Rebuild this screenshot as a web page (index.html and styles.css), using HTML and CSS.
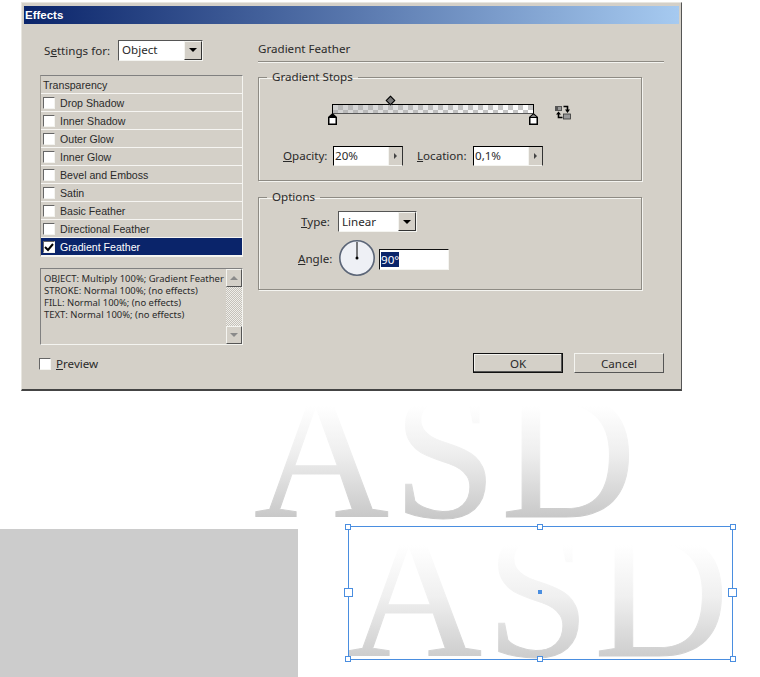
FILE: index.html
```html
<!DOCTYPE html>
<html lang="en">
<head>
    <meta charset="UTF-8">
    <title>Effects</title>
    <link rel="stylesheet" href="styles.css">
</head>
<body>
    <div class="window">
        <div class="titlebar">Effects</div>
        <div class="dialog-body">
            <div class="left-col">
                <div class="settings-row">
                    <label class="settings-label">S<u>e</u>ttings for:</label>
                    <div class="select select-object"><span class="select-value">Object</span><span class="select-btn"><i></i></span></div>
                </div>
                <ul class="effects-list">
                    <li class="effects-head">Transparency</li>
                    <li><span class="check"></span>Drop Shadow</li>
                    <li><span class="check"></span>Inner Shadow</li>
                    <li><span class="check"></span>Outer Glow</li>
                    <li><span class="check"></span>Inner Glow</li>
                    <li><span class="check"></span>Bevel and Emboss</li>
                    <li><span class="check"></span>Satin</li>
                    <li><span class="check"></span>Basic Feather</li>
                    <li><span class="check"></span>Directional Feather</li>
                    <li class="selected">
                        <span class="check">
                            <svg width="10" height="10" viewBox="0 0 10 10"><path d="M1 5l3 3 5-6" fill="none" stroke="#000" stroke-width="2"/></svg>
                        </span>Gradient Feather
                    </li>
                </ul>
                <div class="summary">
                    <div class="summary-text">
                        OBJECT: Multiply 100%; Gradient Feather<br>
                        STROKE: Normal 100%; (no effects)<br>
                        FILL: Normal 100%; (no effects)<br>
                        TEXT: Normal 100%; (no effects)
                    </div>
                    <div class="scrollbar">
                        <span class="scroll-btn"><i class="arrow-up"></i></span>
                        <span class="scroll-btn"><i class="arrow-down"></i></span>
                    </div>
                </div>
                <div class="preview-row"><span class="check"></span><span><u>P</u>review</span></div>
            </div>

            <div class="right-col">
                <div class="panel-title">Gradient Feather</div>

                <fieldset class="group group-stops">
                    <legend>Gradient Stops</legend>
                    <div class="ramp-row">
                        <div class="ramp">
                            <span class="midpoint"></span>
                            <svg class="stop stop-left" width="9" height="12" viewBox="0 0 9 12"><path d="M4.500 0L9 4v8H0V4z" fill="#000"/><rect x="1.500" y="5" width="6" height="5.500" fill="#fff"/></svg>
                            <svg class="stop stop-right" width="9" height="12" viewBox="0 0 9 12"><path d="M4.500 0L9 4v8H0V4z" fill="#000"/><path d="M4.500 1.500L7.500 4H1.500z" fill="#888"/><rect x="1.500" y="5" width="6" height="5.500" fill="#fff"/></svg>
                        </div>
                        <svg class="swap" width="18" height="15" viewBox="0 0 18 15">
                            <rect x="1" y="1" width="7" height="5" fill="#555"/>
                            <rect x="4" y="2" width="3" height="3" fill="#999"/>
                            <path d="M9.500 1.500h4v4" fill="none" stroke="#000" stroke-width="1.600"/>
                            <path d="M11 4.500h5L13.500 8z" fill="#000"/>
                            <path d="M8.500 12.500h-4v-4" fill="none" stroke="#000" stroke-width="1.600"/>
                            <path d="M2 9.500h5L4.500 6.500z" fill="#000"/>
                            <rect x="9.500" y="9" width="7" height="5" fill="#999" stroke="#333" stroke-width=".8"/>
                        </svg>
                    </div>
                    <div class="stops-fields">
                        <label><u>O</u>pacity:</label>
                        <div class="stepper"><span class="stepper-value">20%</span><span class="stepper-btn"><i></i></span></div>
                        <label class="label-location"><u>L</u>ocation:</label>
                        <div class="stepper"><span class="stepper-value">0,1%</span><span class="stepper-btn"><i></i></span></div>
                    </div>
                </fieldset>

                <fieldset class="group group-options">
                    <legend>Options</legend>
                    <div class="type-row">
                        <label><u>T</u>ype:</label>
                        <div class="select select-type"><span class="select-value">Linear</span><span class="select-btn"><i></i></span></div>
                    </div>
                    <div class="angle-row">
                        <label><u>A</u>ngle:</label>
                        <svg class="dial" width="38" height="38" viewBox="0 0 38 38">
                            <circle cx="19" cy="19" r="17.200" fill="#eef0f5" stroke="#5b6577" stroke-width="1.600"/>
                            <path d="M19 3v16" stroke="#000" stroke-width="1"/>
                            <circle cx="19" cy="19" r="1.500" fill="#000"/>
                        </svg>
                        <div class="angle-input"><span class="sel-text">90°</span></div>
                    </div>
                </fieldset>

                <div class="buttons">
                    <button class="btn btn-default">OK</button>
                    <button class="btn">Cancel</button>
                </div>
            </div>
        </div>
    </div>

    <div class="grey-block"></div>
    <div class="asd asd-back">ASD</div>
    <div class="asd asd-front">ASD</div>

    <div class="selection">
        <span class="handle h-tl"></span>
        <span class="handle h-tm"></span>
        <span class="handle h-tr"></span>
        <span class="handle big h-ml"></span>
        <span class="center-dot"></span>
        <span class="handle big h-mr"></span>
        <span class="handle h-bl"></span>
        <span class="handle h-bm"></span>
        <span class="handle h-br"></span>
    </div>
</body>
</html>
```

FILE: styles.css
```css
html, body {
    margin: 0;
    padding: 0;
}
body {
    position: relative;
    width: 760px;
    height: 677px;
    overflow: hidden;
    background: #fff;
    font-family: "Noto Sans", sans-serif;
    font-size: 11.600px;
    color: #2a2a2a;
}

/* dialog window */
.window {
    position: absolute;
    left: 21px;
    top: 2px;
    width: 661px;
    height: 389px;
    box-sizing: border-box;
    padding: 3px 2px 0 2px;
    background: #d4d0c8;
    border: 1px solid #e8e6e0;
    border-right: 1px solid #555;
    border-bottom: 2px solid #444;
    z-index: 2;
}
.titlebar {
    height: 18px;
    line-height: 18px;
    padding-left: 1px;
    color: #fff;
    font-family: "Liberation Sans", sans-serif;
    font-weight: bold;
    font-size: 11.500px;
    background: linear-gradient(to right, #0a246a, #a6caf0);
}
.dialog-body {
    display: flex;
    padding: 16px 0 0 16px;
}
.left-col {
    width: 203px;
    flex-shrink: 0;
}
.right-col {
    width: 406px;
    margin-left: 15px;
}

/* settings for */
.settings-row {
    display: flex;
    align-items: center;
    height: 20px;
    padding-left: 4px;
}
.settings-label {
    width: 74px;
}

/* select */
.select {
    display: flex;
    box-sizing: border-box;
    height: 21px;
    background: #fff;
    border: 1px solid;
    border-color: #555 #f4f4f0 #f4f4f0 #555;
}
.select-object {
    width: 85px;
}
.select-object .select-value {
    line-height: 17px;
}
.select-type {
    width: 79px;
}
.select-value {
    flex: 1;
    line-height: 19px;
    padding-left: 3px;
}
.select-btn {
    display: flex;
    align-items: center;
    justify-content: center;
    width: 16px;
    background: #d4d0c8;
    border: 1px solid;
    border-color: #f4f4f0 #333 #333 #f4f4f0;
}
.select-btn i {
    border-left: 4px solid transparent;
    border-right: 4px solid transparent;
    border-top: 4px solid #000;
}

/* effects list */
.effects-list {
    list-style: none;
    margin: 15px 0 0;
    padding: 0;
    border-top: 1px solid #808080;
    border-left: 1px solid #a09c94;
    border-right: 1px solid #f4f4f0;
    border-bottom: 1px solid #f4f4f0;
}
.effects-list li {
    display: flex;
    align-items: center;
    box-sizing: border-box;
    height: 18px;
    padding-left: 2px;
    font-family: "Liberation Sans", sans-serif;
    font-size: 10.600px;
    border-bottom: 1px solid #f6f5f2;
}
.effects-list li .check {
    margin-right: 5px;
}
.effects-list .selected {
    background: #0a246a;
    color: #fff;
}
.check {
    display: flex;
    align-items: center;
    justify-content: center;
    box-sizing: border-box;
    width: 12px;
    height: 12px;
    flex-shrink: 0;
    background: #fff;
    border: 1px solid;
    border-color: #666 #f4f4f0 #f4f4f0 #666;
}

/* summary box */
.summary {
    display: flex;
    box-sizing: border-box;
    height: 77px;
    margin-top: 11px;
    border: 1px solid;
    border-color: #808080 #f4f4f0 #f4f4f0 #808080;
}
.summary-text {
    flex: 1;
    padding: 4px 0 0 3px;
    font-size: 9.450px;
    line-height: 12px;
    white-space: nowrap;
}
.scrollbar {
    display: flex;
    flex-direction: column;
    justify-content: space-between;
    width: 16px;
    background: repeating-conic-gradient(#f0eee9 0 25%, #c4c1ba 0 50%) 0 0 / 2px 2px;
}
.scroll-btn {
    display: flex;
    align-items: center;
    justify-content: center;
    height: 16px;
    background: #d4d0c8;
    border: 1px solid;
    border-color: #f4f4f0 #555 #555 #f4f4f0;
}
.arrow-up {
    border-left: 4px solid transparent;
    border-right: 4px solid transparent;
    border-bottom: 4px solid #8a8a8a;
}
.arrow-down {
    border-left: 4px solid transparent;
    border-right: 4px solid transparent;
    border-top: 4px solid #8a8a8a;
}
.preview-row {
    display: flex;
    align-items: center;
    gap: 5px;
    margin-top: 11px;
    margin-left: -1px;
}

/* right side */
.panel-title {
    height: 21px;
    line-height: 18px;
    border-bottom: 1px solid #8e8b84;
    box-shadow: 0 1px 0 #f4f4f0;
}
.group {
    box-sizing: border-box;
    width: 384px;
    margin: 0;
    padding: 0;
    min-width: 0;
    border: 1px solid #8e8b84;
    box-shadow: inset 1px 1px 0 #f4f4f0, 1px 1px 0 #f4f4f0;
}
.group legend {
    margin-left: 8px;
    padding: 0 5px;
    line-height: 16px;
}
.group-stops {
    height: 112px;
    margin-top: 7px;
}
.group-options {
    height: 101px;
    margin-top: 8px;
}

/* gradient ramp */
.ramp-row {
    display: flex;
    align-items: flex-start;
    padding: 19px 0 0 73px;
}
.ramp {
    position: relative;
    box-sizing: border-box;
    width: 202px;
    height: 10px;
    border: 1px solid #000;
    border-bottom-color: #555;
    background:
        linear-gradient(to right, rgba(170, 170, 170, .55), rgba(255, 255, 255, 0)),
        repeating-conic-gradient(#c6c6c6 0 25%, #fff 0 50%) 0 0 / 10px 10px;
}
.midpoint {
    position: absolute;
    left: 54px;
    top: -8px;
    width: 5px;
    height: 5px;
    background: #777;
    border: 1px solid #000;
    transform: rotate(45deg);
}
.stop {
    position: absolute;
    top: 8px;
}
.stop-left {
    left: -5px;
}
.stop-right {
    right: -5px;
}
.swap {
    margin: 1px 0 0 20px;
}
.stops-fields {
    display: flex;
    align-items: center;
    height: 21px;
    margin-top: 25px;
    padding-left: 24px;
}
.stops-fields label {
    width: 50px;
}
.stops-fields .label-location {
    width: 56px;
    margin-left: 14px;
}
.stepper {
    display: flex;
    box-sizing: border-box;
    width: 70px;
    height: 20px;
    background: #fff;
    border: 1px solid;
    border-color: #000 #333 #f4f4f0 #000;
}
.stepper-value {
    flex: 1;
    line-height: 18px;
    padding-left: 1px;
}
.stepper-btn {
    display: flex;
    align-items: center;
    justify-content: center;
    width: 13px;
    background: #d4d0c8;
    border-left: 1px solid #f4f4f0;
}
.stepper-btn i {
    border-top: 3px solid transparent;
    border-bottom: 3px solid transparent;
    border-left: 3px solid #444;
}

/* options */
.type-row, .angle-row {
    display: flex;
    align-items: center;
}
.type-row {
    height: 21px;
    margin-top: 6px;
    padding-left: 42px;
}
.type-row label {
    width: 37px;
}
.angle-row {
    height: 38px;
    margin-top: 7px;
    padding-left: 39px;
}
.angle-row label {
    width: 40px;
}
.dial {
    flex-shrink: 0;
}
.angle-input {
    box-sizing: border-box;
    width: 70px;
    height: 21px;
    margin: 3px 0 0 3px;
    padding: 2px 0 0 1px;
    line-height: 15px;
    background: #fff;
    border: 1px solid;
    border-color: #111 #f4f4f0 #f4f4f0 #111;
}
.sel-text {
    display: inline-block;
    background: #0a246a;
    color: #fff;
}

/* buttons */
.buttons {
    display: flex;
    justify-content: flex-end;
    gap: 11px;
    margin-top: 63px;
}
.btn {
    box-sizing: border-box;
    width: 90px;
    height: 20px;
    padding: 0;
    font-family: inherit;
    font-size: 11.600px;
    color: #2a2a2a;
    background: #d4d0c8;
    border: 1px solid;
    border-color: #f4f4f0 #555 #555 #f4f4f0;
}
.btn-default {
    border-color: #111;
    box-shadow: inset -1px -1px 0 #555, inset 1px 1px 0 #f4f4f0;
}

/* canvas below the dialog */
.grey-block {
    position: absolute;
    left: 0;
    top: 529px;
    width: 298px;
    height: 148px;
    background: #ccc;
}
.asd {
    position: absolute;
    height: 160px;
    font-family: "Liberation Serif", serif;
    font-size: 187px;
    line-height: 160px;
    letter-spacing: 4px;
    color: transparent;
    -webkit-text-stroke: 1px transparent;
    -webkit-background-clip: text;
    background-clip: text;
    background-image: linear-gradient(to bottom, #fff 20%, #eee 50%, #c6c6c6 92%);
}
.asd-back {
    left: 254px;
    top: 374px;
    z-index: 1;
}
.asd-front {
    left: 347px;
    top: 513px;
    background-image: linear-gradient(to bottom, #fff 20%, #f0f0f0 52%, #cbcbcb 92%);
}

/* selected frame */
.selection {
    position: absolute;
    left: 348px;
    top: 526px;
    width: 385px;
    height: 134px;
    box-sizing: border-box;
    border: 1px solid #4a8ee0;
}
.handle {
    position: absolute;
    box-sizing: border-box;
    width: 6px;
    height: 6px;
    background: #fff;
    border: 1px solid #4a8ee0;
}
.handle.big {
    width: 9px;
    height: 9px;
}
.h-tl { left: -4px; top: -3px; }
.h-tm { left: 188px; top: -3px; }
.h-tr { right: -4px; top: -3px; }
.h-ml { left: -5px; top: 61px; }
.h-mr { right: -5px; top: 61px; }
.h-bl { left: -4px; bottom: -3px; }
.h-bm { left: 188px; bottom: -3px; }
.h-br { right: -4px; bottom: -3px; }
.center-dot {
    position: absolute;
    left: 189px;
    top: 63px;
    width: 4px;
    height: 4px;
    background: #4a8ee0;
}
```
